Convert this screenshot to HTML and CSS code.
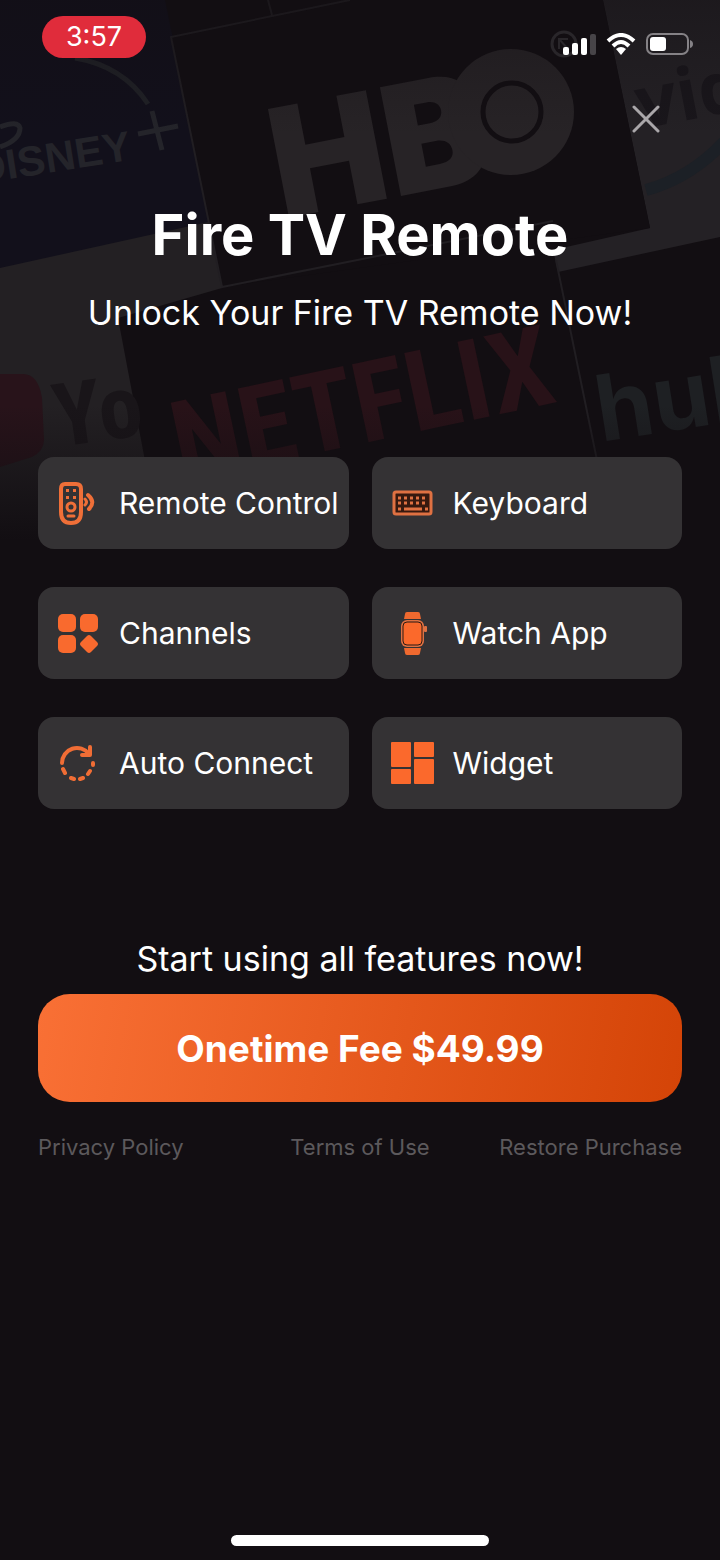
FILE: index.html
```html
<!DOCTYPE html>
<html lang="en">
<head>
    <meta charset="UTF-8">
    <meta name="viewport" content="width=device-width, initial-scale=1.0">
    <title>Fire TV Remote</title>
    <link rel="stylesheet" href="styles.css">
</head>
<body>
    <!-- Faded wall of channel logos behind the header -->
    <svg class="backdrop" viewBox="0 0 720 540" aria-hidden="true">
        <defs>
            <linearGradient id="fade" x1="0" y1="0" x2="0" y2="1">
                <stop offset="0" stop-color="#120e12" stop-opacity="0.4"/>
                <stop offset="0.25" stop-color="#120e12" stop-opacity="0"/>
                <stop offset="0.75" stop-color="#120e12" stop-opacity="0"/>
                <stop offset="1" stop-color="#120e12"/>
            </linearGradient>
        </defs>
        <path fill="#12101b" d="M0 0H165L215 243L0 270Z"/>
        <path fill="#232023" d="M0 268L213 221L222 288L118 318L160 540H0Z"/>
        <path fill="#242125" d="M603 0H720V237L558 272L553 250L650 228Z"/>
        <path fill="#120e12" d="M171 38L350 1H603L650 228L222 287Z"/>
        <path class="seam" d="M268 0L272 15M350 0L171 37L222 287L553 221M556 260L600 475"/>
        <path fill="none" stroke="#202126" stroke-width="5" d="M75 58Q123 66 148 104"/>
        <path fill="none" stroke="#24242a" stroke-width="5" d="M152 111L162 150M138 134L178 126"/>
        <path fill="none" stroke="#24242a" stroke-width="5" d="M0 127Q18 120 20 128Q20 140 0 147"/>
        <text class="disney" transform="translate(-22 184) rotate(-9)">DISNEY</text>
        <text class="hbo" transform="translate(282 219) rotate(-11)">HB</text>
        <circle cx="511" cy="112" r="63" fill="#272326"/>
        <circle cx="512" cy="112" r="29" fill="none" stroke="#120e12" stroke-width="5"/>
        <text class="prime" transform="translate(641 129) rotate(-11)">video</text>
        <path fill="none" stroke="#1c2026" stroke-width="12" d="M646 190Q690 178 724 142"/>
        <path fill="#28131a" d="M0 374H22Q38 373 42 398L44 440Q44 451 32 457L0 467Z"/>
        <text class="youtube" transform="translate(58 447) rotate(-8)">Yo</text>
        <text class="netflix" transform="translate(181 482) rotate(-12)">NETFLIX</text>
        <text class="hulu" transform="translate(601 442) rotate(-9)">hulu</text>
        <rect width="720" height="540" fill="url(#fade)"/>
    </svg>

    <div class="screen">
        <div class="status-bar">
            <span class="time">3:57</span>
            <div class="status-icons">
                <svg width="50" height="30" viewBox="0 0 50 30">
                    <circle cx="18" cy="15" r="12" fill="none" stroke="#29262a" stroke-width="3"/>
                    <path d="M13 10L22 20M13 20V10L22 10" fill="none" stroke="#29262a" stroke-width="2"/>
                    <rect x="17" y="18" width="6" height="8" rx="2" fill="#fff"/>
                    <rect x="26" y="14" width="6" height="12" rx="2" fill="#fff"/>
                    <rect x="35" y="9" width="6" height="17" rx="2" fill="#fff"/>
                    <rect x="44" y="5" width="6" height="21" rx="2" fill="#474448"/>
                </svg>
                <svg width="30" height="22" viewBox="0 0 30 22">
                    <g fill="none" stroke="#fff" stroke-width="4">
                        <path d="M2 8Q15 -4 28 8"/>
                        <path d="M7 13Q15 5 23 13"/>
                    </g>
                    <path fill="#fff" d="M10 16Q15 12 20 16L15 22Z"/>
                </svg>
                <svg width="48" height="22" viewBox="0 0 48 22">
                    <rect x="1" y="1" width="41" height="20" rx="6" fill="none" stroke="#858286" stroke-width="2"/>
                    <rect x="4" y="4" width="16" height="14" rx="3" fill="#fff"/>
                    <path fill="#858286" d="M44 7Q47 8 47 11Q47 14 44 15Z"/>
                </svg>
            </div>
        </div>

        <button class="close" type="button" aria-label="Close">
            <svg width="28" height="28" viewBox="0 0 28 28">
                <path d="M2 2L26 26M26 2L2 26" stroke="#aaa7aa" stroke-width="3" stroke-linecap="round"/>
            </svg>
        </button>

        <header>
            <h1>Fire TV Remote</h1>
            <p>Unlock Your Fire TV Remote Now!</p>
        </header>

        <ul class="features">
            <li>
                <svg class="icon" viewBox="0 0 44 44">
                    <g fill="none" stroke="#ef6f38" stroke-width="4" stroke-linecap="round">
                        <path d="M9 3H20Q25 3 25 8V31Q25 42 15 42Q5 42 5 31V8Q5 3 9 3Z"/>
                        <path d="M32 14Q40 21 33 28"/>
                    </g>
                    <g fill="none" stroke="#ef6f38" stroke-width="3" stroke-linecap="round">
                        <circle cx="15" cy="26" r="4"/>
                        <path d="M12 35H18M29 18Q32 21 29 24"/>
                    </g>
                    <path fill="#ef6f38" d="M10 8H13V11H10ZM17 8H20V11H17ZM10 15H13V18H10ZM17 15H20V18H17Z"/>
                </svg>
                <span>Remote Control</span>
            </li>
            <li>
                <svg class="icon" viewBox="0 0 44 44">
                    <rect x="4" y="11" width="37" height="22" rx="2" fill="#36190f" stroke="#df7142" stroke-width="3"/>
                    <g stroke="#df7142" stroke-width="3">
                        <path d="M8 17H37M8 22H37" stroke-dasharray="3 3"/>
                        <path d="M8 28H11M14 28H32M35 28H38"/>
                    </g>
                </svg>
                <span>Keyboard</span>
            </li>
            <li>
                <svg class="icon" viewBox="0 0 44 44" fill="#f96a2e">
                    <rect x="2" y="3" width="18" height="18" rx="5"/>
                    <rect x="24" y="3" width="18" height="18" rx="5"/>
                    <rect x="2" y="24" width="18" height="18" rx="5"/>
                    <path d="M31 25Q33 23 35 25L41 31Q43 33 41 35L35 41Q33 43 31 41L25 35Q23 33 25 31Z"/>
                </svg>
                <span>Channels</span>
            </li>
            <li>
                <svg class="icon" viewBox="0 0 44 44">
                    <path fill="#ef692f" d="M14 8L15 3Q15 1 17 1H28Q30 1 30 3L31 8ZM14 37L15 42Q15 44 17 44H28Q30 44 30 42L31 37Z"/>
                    <rect x="11" y="9" width="23" height="27" rx="6" fill="#df7142"/>
                    <rect x="34" y="15" width="3" height="6" rx="1" fill="#df7142"/>
                    <rect x="13" y="11" width="19" height="23" rx="4" fill="#fb692b" stroke="#2b1913"/>
                </svg>
                <span>Watch App</span>
            </li>
            <li>
                <svg class="icon" viewBox="0 0 44 44">
                    <g fill="none" stroke="#f06d35" stroke-width="4" stroke-linecap="round" stroke-linejoin="round">
                        <path d="M6 22A15 15 0 0 1 33 13"/>
                        <path d="M34 6V14H26"/>
                        <path d="M7 28L9 32M15 37L18 38M24 38L27 37M32 33L34 30M37 24V22"/>
                    </g>
                </svg>
                <span>Auto Connect</span>
            </li>
            <li>
                <svg class="icon" viewBox="0 0 44 44" fill="#fb692c">
                    <rect x="1" y="1" width="20" height="25" rx="1"/>
                    <rect x="24" y="1" width="20" height="15" rx="1"/>
                    <rect x="1" y="28" width="20" height="15" rx="1"/>
                    <rect x="24" y="18" width="20" height="25" rx="1"/>
                </svg>
                <span>Widget</span>
            </li>
        </ul>

        <section class="purchase">
            <p>Start using all features now!</p>
            <button class="buy" type="button">Onetime Fee $49.99</button>
            <nav>
                <a href="#">Privacy Policy</a>
                <a href="#">Terms of Use</a>
                <a href="#">Restore Purchase</a>
            </nav>
        </section>

        <div class="home-indicator"></div>
    </div>
</body>
</html>
```
FILE: styles.css
```css
* {
    box-sizing: border-box;
}

body {
    margin: 0;
    background-color: #120e12;
    color: #fff;
    font-family: Inter, "Liberation Sans", sans-serif;
}

/* logo wall */
.backdrop {
    position: absolute;
    top: 0;
    left: 0;
    width: 100%;
    z-index: -1;
}

.backdrop text {
    font-family: "Liberation Sans", sans-serif;
    font-weight: bold;
}

.seam {
    fill: none;
    stroke: #211e22;
    stroke-width: 2;
}

.backdrop .disney {
    font-size: 42px;
    fill: #24242a;
}

.backdrop .hbo {
    font-family: Inter, sans-serif;
    font-size: 152px;
    font-weight: 900;
    fill: #272326;
}

.backdrop .prime {
    font-family: "Open Sans", sans-serif;
    font-size: 72px;
    fill: #19161b;
}

.backdrop .youtube {
    font-family: "Liberation Sans Narrow", "Roboto Condensed", "DejaVu Sans Condensed", sans-serif;
    font-size: 88px;
    fill: #191519;
}

.backdrop .netflix {
    font-family: "Liberation Sans Narrow", "Roboto Condensed", "Liberation Sans", sans-serif;
    font-size: 112px;
    fill: #281218;
}

.backdrop .hulu {
    font-family: Inter, sans-serif;
    font-size: 92px;
    fill: #1e2023;
}

.screen {
    display: flex;
    flex-direction: column;
    min-height: 100vh;
    padding: 16px 38px 14px;
}

.status-bar {
    display: flex;
    justify-content: space-between;
    align-items: flex-start;
    margin: 0 -12px 0 4px;
}

.time {
    width: 104px;
    border-radius: 21px;
    background-color: #e02c3b;
    font-size: 27px;
    line-height: 42px;
    text-align: center;
}

.status-icons {
    display: flex;
    align-items: center;
    gap: 10px;
    padding-top: 13px;
}

.close {
    align-self: flex-end;
    display: flex;
    margin: 36px 12px 0 0;
    padding: 10px;
    border: none;
    background: none;
    cursor: pointer;
}

header {
    margin-top: 58px;
    text-align: center;
}

h1 {
    margin: 0;
    font-size: 56px;
    line-height: 68px;
}

header p,
.purchase p {
    margin: 0;
    font-size: 34px;
    line-height: 40px;
}

header p {
    margin-top: 24px;
}

.features {
    display: grid;
    grid-template-columns: 1fr 1fr;
    gap: 38px 23px;
    margin: 124px 0 0;
    padding: 0;
    list-style: none;
}

.features li {
    display: flex;
    align-items: center;
    gap: 19px;
    height: 92px;
    padding-left: 18px;
    border-radius: 16px;
    background-color: #343234;
    font-size: 30px;
    white-space: nowrap;
}

.icon {
    flex: none;
    width: 44px;
    height: 44px;
}

.purchase {
    margin-top: 130px;
    text-align: center;
}

.buy {
    display: block;
    width: 100%;
    height: 108px;
    margin-top: 15px;
    border: none;
    border-radius: 32px;
    background: linear-gradient(100deg, #f97035, #d44407);
    color: #fff;
    font: bold 37px Inter, sans-serif;
    cursor: pointer;
}

nav {
    display: grid;
    grid-template-columns: 1fr auto 1fr;
    margin-top: 31px;
    text-align: left;
}

nav a {
    color: #5c595c;
    font-size: 22px;
    line-height: 28px;
    text-decoration: none;
}

nav a:last-child {
    text-align: right;
}

.home-indicator {
    width: 258px;
    height: 11px;
    margin: auto auto 0;
    border-radius: 6px;
    background-color: #fff;
}
```
